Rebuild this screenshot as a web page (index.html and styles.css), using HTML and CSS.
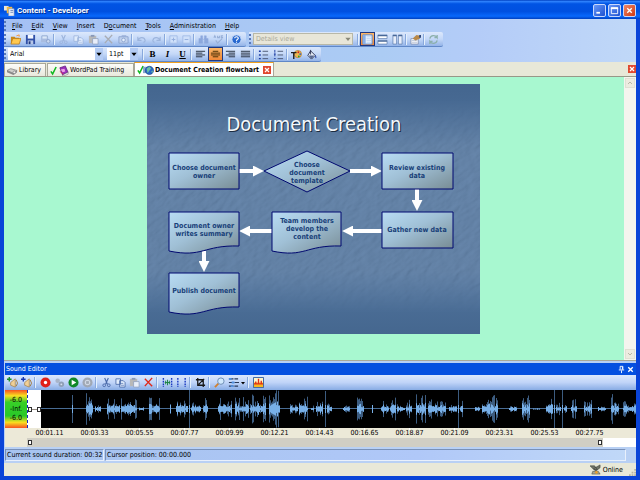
FILE: index.html
```html
<!DOCTYPE html>
<html lang="en">
<head>
    <meta charset="UTF-8">
    <meta name="viewport" content="width=device-width, initial-scale=1.0">
    <title>Content - Developer</title>
    <link rel="stylesheet" href="styles.css">
</head>
<body>
    <!-- icons used by the toolbars -->
    <svg class="defs" aria-hidden="true">
        <symbol id="app" viewBox="0 0 12 12"><path d="M0 1h5v5H0z" fill="#e8e8e0"/><path d="M3 2h6v7H3z" fill="#f0b840"/><path d="M5 4h6v8H5z" fill="#e4ecf8" stroke="#8090b0" stroke-width=".6"/><path d="M7 6h3M7 8h3" stroke="#7088b8"/></symbol>
        <symbol id="open" viewBox="0 0 12 12"><path d="M1 3h4l1 1h4v6H1z" fill="#c88818"/><path d="M3 5h9l-2 6H1z" fill="#ffc850" stroke="#b87818" stroke-width=".8"/><path d="M7 2l3-1v2" fill="none" stroke="#f89030"/></symbol>
        <symbol id="save" viewBox="0 0 12 12"><path d="M1 1h10v10H1z" fill="#3050a8"/><path d="M3 1h6v4H3z" fill="#f4f8ff"/><path d="M3 7h6v4H3z" fill="#b8c8e8"/><path d="M4 8h2v3H4z" fill="#203880"/></symbol>
        <symbol id="print" viewBox="0 0 12 12"><path d="M2 2h6v4H2z" fill="#dce8f8" stroke="#90a8d0"/><path d="M1 5h8v4H1z" fill="#a8bce0"/><circle cx="9" cy="8" r="2" fill="#c8d8f0" stroke="#88a0cc"/></symbol>
        <symbol id="cut" viewBox="0 0 12 12"><path d="M4 1l3 7M8 1L5 8" fill="none" stroke="currentColor" stroke-width="1.2"/><circle cx="3.500" cy="9" r="1.500" fill="none" stroke="currentColor"/><circle cx="8.500" cy="9" r="1.500" fill="none" stroke="currentColor"/></symbol>
        <symbol id="copy" viewBox="0 0 12 12"><path d="M1 2h5v6H1zM5 4h4l2 2v5H5z" fill="#e0ecfc" stroke="currentColor" stroke-width=".9"/><path d="M6 7h3M6 9h4" stroke="currentColor" stroke-width=".7"/></symbol>
        <symbol id="paste" viewBox="0 0 12 12"><path d="M1 2h8v8H1z" fill="#b8b8b8"/><path d="M3 1h4v2H3z" fill="#8898b8"/><path d="M5 5h6v6H5z" fill="#e8eefa" stroke="#8c9cbc" stroke-width=".8"/></symbol>
        <symbol id="del" viewBox="0 0 12 12"><path d="M2 2l8 8M10 1L2 10" fill="none" stroke="currentColor" stroke-width="1.500"/></symbol>
        <symbol id="camera" viewBox="0 0 12 12"><path d="M1 3h10v7H1zM4 2h5" fill="#c0d0ec" stroke="#8ca4d0"/><circle cx="6" cy="6.500" r="2" fill="#e4eefc" stroke="#8ca4d0"/></symbol>
        <symbol id="undo" viewBox="0 0 12 12"><path d="M2 3v4h4M2 7c2-4 7-4 8 0 0 1-1 2-2 2" fill="none" stroke="currentColor" stroke-width="1.200"/></symbol>
        <symbol id="redo" viewBox="0 0 12 12"><path d="M10 3v4H6M10 7C8 3 3 3 2 7c0 1 1 2 2 2" fill="none" stroke="currentColor" stroke-width="1.200"/></symbol>
        <symbol id="plus" viewBox="0 0 12 12"><path d="M2 2h8v8H2z" fill="#cfe0fa" stroke="#a4bce8"/><path d="M4 6h4M6 4v4" stroke="#90acdc"/></symbol>
        <symbol id="minus" viewBox="0 0 12 12"><path d="M2 2h8v8H2z" fill="#cfe0fa" stroke="#a4bce8"/><path d="M4 6h4" stroke="#90acdc"/></symbol>
        <symbol id="find" viewBox="0 0 12 12"><path d="M3 2h2v3H3zM7 2h2v3H7zM1 5h4v5H1zM7 5h4v5H7zM5 6h2" fill="#8ca8dc" stroke="#8ca8dc" stroke-width=".5"/></symbol>
        <symbol id="spell" viewBox="0 0 12 12"><path d="M1 4l1-2 1 2M5 2v2h2V2M11 2H9v2h2M3 7l2 3 5-5" fill="none" stroke="#98b0d8" stroke-width="1.200"/></symbol>
        <symbol id="help" viewBox="0 0 12 12"><circle cx="6" cy="6" r="5" fill="#2868d0" stroke="#c8dcf8"/><path d="M4 4.500c0-2 4-2 4 0C8 6 6 5.500 6 7.500M6 8.500v1" fill="none" stroke="#fff" stroke-width="1.200"/></symbol>
        <symbol id="pane" viewBox="0 0 12 12"><path d="M1 1h10v10H1z" fill="#e8f2fe" stroke="#5888d0"/><path d="M1 1h3v10H1z" fill="#88b0e8"/><path d="M5 3h5M5 5h5M5 7h5M5 9h5" stroke="#a8c4e8" stroke-width=".6"/></symbol>
        <symbol id="rows" viewBox="0 0 12 12"><path d="M1 1h10v4H1zM1 7h10v4H1z" fill="#fff" stroke="#6080b0" stroke-width=".8"/><path d="M1 1h10v1.500H1zM1 7h10v1.500H1z" fill="#486898"/></symbol>
        <symbol id="cols" viewBox="0 0 12 12"><path d="M1 1h4v10H1zM7 1h4v10H7z" fill="#e8eefa" stroke="#6080b0" stroke-width=".8"/><path d="M1 1h4v1.500H1zM7 1h4v1.500H7z" fill="#486898"/></symbol>
        <symbol id="props" viewBox="0 0 12 12"><path d="M1 5h8v6H1z" fill="#f8fafe" stroke="#7888a8" stroke-width=".8"/><path d="M2 7h6M2 9h6" stroke="#a0acc4" stroke-width=".7"/><path d="M3 5l4-4 4 1v3L6 7z" fill="#b88848"/><path d="M10 1h2v3h-2z" fill="#304878"/></symbol>
        <symbol id="refresh" viewBox="0 0 12 12"><path d="M2 5c1-4 6-4 8-1V1M10 4H7M10 7c-1 4-6 4-8 1v3M2 8h3" fill="none" stroke="#8cb0ac" stroke-width="1.400"/></symbol>
        <symbol id="left" viewBox="0 0 12 12"><path d="M1 2.500h10M1 4.500h7M1 6.500h10M1 8.500h7" stroke="#202838"/></symbol>
        <symbol id="center" viewBox="0 0 12 12"><path d="M3 2.500h6M1 4.500h10M1 6.500h10M3 8.500h6" stroke="#402800"/></symbol>
        <symbol id="right" viewBox="0 0 12 12"><path d="M1 2.500h10M4 4.500h7M1 6.500h10M4 8.500h7" stroke="#202838"/></symbol>
        <symbol id="full" viewBox="0 0 12 12"><path d="M1 2.500h10M1 4.500h10M1 6.500h10M1 8.500h10" stroke="#202838"/></symbol>
        <symbol id="list" viewBox="0 0 12 12"><path d="M1 2.500h2M1 6.500h2M1 10.500h2" stroke="#1838a0" stroke-width="1.600"/><path d="M5 2.500h6M5 6.500h6M5 10.500h6" stroke="#485470"/></symbol>
        <symbol id="nums" viewBox="0 0 12 12"><path d="M2 1v3M1 5.500h2M2 5v3M1 10.500h2" stroke="#1838a0"/><path d="M5 2.500h6M5 6.500h6M5 10.500h6" stroke="#485470"/></symbol>
        <symbol id="palette" viewBox="0 0 12 12"><circle cx="7.500" cy="5.500" r="4" fill="#f0b850" stroke="#a06818" stroke-width=".6"/><circle cx="8" cy="3.500" r="1" fill="#d02020"/><circle cx="10" cy="5.500" r="1" fill="#2860d0"/><circle cx="8.500" cy="8" r="1" fill="#20a030"/><path d="M0 4h6M3 4v7" stroke="#202020" stroke-width="1.500"/></symbol>
        <symbol id="bucket" viewBox="0 0 12 12"><path d="M5 2l5 5-4 4-4-4z" fill="#e8eef8" stroke="#283050"/><path d="M3 7h6l-3 4z" fill="#586890"/><path d="M5 6V1" stroke="#283050"/><path d="M10 6q2 3 1 4-1 1-1-4" fill="#1838a0"/></symbol>
        <symbol id="disk" viewBox="0 0 12 12"><path d="M0 6l4-2 7 2-4 3z" fill="#d0d0cc" stroke="#808080" stroke-width=".8"/><path d="M0 6v2l7 3V9zM11 6v2l-4 3V9z" fill="#888"/><circle cx="8" cy="8" r="1.500" fill="#eee" stroke="#666" stroke-width=".6"/></symbol>
        <symbol id="check" viewBox="0 0 8 12"><path d="M1 7l2 3 4-8" fill="none" stroke="#10b820" stroke-width="1.800"/></symbol>
        <symbol id="book" viewBox="0 0 12 12"><path d="M2 3l6-2 3 7-6 3z" fill="#9830b8" stroke="#501070" stroke-width=".7"/><path d="M3 5l4-1 1 3-3 1z" fill="#f0a0e8"/><path d="M5 11l6-3v2l-5 2z" fill="#fff" stroke="#555" stroke-width=".5"/><path d="M2 7l4 3" stroke="#d02060"/></symbol>
        <symbol id="globe" viewBox="0 0 12 12"><path d="M0 3h5v7H0z" fill="#88a8d0"/><circle cx="7" cy="7" r="4.500" fill="#2868c8" stroke="#103878" stroke-width=".6"/><path d="M4 5l3-2 2 2-2 2-2 3zM9 8l2-1-1 3z" fill="#68c0a0"/></symbol>
        <symbol id="close" viewBox="0 0 10 10"><path d="M2.500 2.500l5 5M7.500 2.500l-5 5" stroke="#fff" stroke-width="1.500"/></symbol>
        <symbol id="min" viewBox="0 0 10 10"><path d="M1.500 7.500h4" stroke="#fff" stroke-width="2"/></symbol>
        <symbol id="max" viewBox="0 0 10 10"><path d="M1.500 2h7v6.500h-7z" fill="none" stroke="#fff"/><path d="M1 2.500h8" stroke="#fff" stroke-width="2"/></symbol>
        <symbol id="pin" viewBox="0 0 10 10"><path d="M3.500 5V1.500h3V5M2 5.500h6M5 6v3M6 2v3" fill="none" stroke="#fff"/></symbol>
        <symbol id="addsound" viewBox="0 0 12 12"><path d="M0 2.500h5M2.500 0v5" stroke="currentColor" stroke-width="1.500"/><path d="M4 6l5-4v9L4 9z" fill="#f0d098" stroke="#a07838" stroke-width=".7"/><path d="M10 3q3 4 0 7" fill="none" stroke="#a07838"/></symbol>
        <symbol id="rec" viewBox="0 0 12 12"><circle cx="6" cy="6" r="5.500" fill="#e02018"/><circle cx="6" cy="6" r="1.800" fill="#fff"/></symbol>
        <symbol id="mics" viewBox="0 0 12 12"><circle cx="4" cy="4" r="2.500" fill="#a8b4c8"/><circle cx="8" cy="8" r="3" fill="#90a0b8"/><circle cx="8" cy="8" r="1" fill="#d8e0f0"/></symbol>
        <symbol id="play" viewBox="0 0 12 12"><circle cx="6" cy="6" r="5.500" fill="#108828"/><path d="M4 3l5 3-5 3z" fill="#fff"/></symbol>
        <symbol id="stop" viewBox="0 0 12 12"><circle cx="6" cy="6" r="5.500" fill="#a0a8b4"/><circle cx="6" cy="6" r="3" fill="#d0d8e4"/><path d="M4.500 4.500h3v3h-3z" fill="#a0a8b4"/></symbol>
        <symbol id="trim" viewBox="0 0 12 12"><path d="M1.500 1v10M10.500 1v10" stroke="#1838c0" stroke-width="1.500" stroke-dasharray="2 1"/><path d="M3 6h6M4 4v4M6 3v6M8 4v4" stroke="#188040"/></symbol>
        <symbol id="marks" viewBox="0 0 12 12"><path d="M2 1v10M10 1v10" stroke="#1838c0" stroke-width="1.500" stroke-dasharray="2 1"/></symbol>
        <symbol id="crop" viewBox="0 0 12 12"><path d="M3 1v8h8M1 3h8v8M4 8l6-6" fill="none" stroke="#181818" stroke-width="1.400"/></symbol>
        <symbol id="lens" viewBox="0 0 12 12"><path d="M1 11l4-4" stroke="#d08030" stroke-width="2"/><circle cx="7.500" cy="4.500" r="3.500" fill="#d0e8fc" stroke="#6888b0"/></symbol>
        <symbol id="levels" viewBox="0 0 12 12"><path d="M1 2h5M1 6h5M1 10h5M7 2h4M7 6h5M7 10h4" stroke="#283858" stroke-width="1.300"/><path d="M1 1h3v2H1zM4 5h3v2H4zM3 9h3v2H3z" fill="#5090e0"/></symbol>
        <symbol id="down" viewBox="0 0 6 6"><path d="M1 2h4L3 4.500z" fill="currentColor"/></symbol>
        <symbol id="chart" viewBox="0 0 12 12"><path d="M.5.500h11v11H.5z" fill="#fff4c8" stroke="#2858a0"/><path d="M1 6h10v5H1z" fill="#f8b820"/><path d="M3 5v3M6 2v6M9 4v4M1 7.500h10" stroke="#e03018" stroke-width="1.500"/></symbol>
        <symbol id="online" viewBox="0 0 12 12"><path d="M0 2h5l3 4H4zM4 5l7-4v3L6 8z" fill="#707468" stroke="#383c38" stroke-width=".6"/><path d="M3 8h6l2 3H2z" fill="#a8a890" stroke="#484840" stroke-width=".6"/><circle cx="7" cy="9" r="1.500" fill="#e8a030"/></symbol>
    </svg>

    <div class="window">
        <header class="titlebar">
            <svg class="icon"><use href="#app"/></svg>
            <h1>Content - Developer</h1>
            <button class="winbtn" aria-label="Minimize"><svg><use href="#min"/></svg></button>
            <button class="winbtn" aria-label="Maximize"><svg><use href="#max"/></svg></button>
            <button class="winbtn red" aria-label="Close"><svg><use href="#close"/></svg></button>
        </header>

        <div class="bars">
            <nav class="menu">
                <span class="grip"></span>
                <button><u>F</u>ile</button>
                <button><u>E</u>dit</button>
                <button><u>V</u>iew</button>
                <button><u>I</u>nsert</button>
                <button>D<u>o</u>cument</button>
                <button><u>T</u>ools</button>
                <button><u>A</u>dministration</button>
                <button><u>H</u>elp</button>
            </nav>
            <div class="row">
                <div class="toolbar">
                    <span class="grip"></span>
                    <button class="tool" aria-label="Open"><svg><use href="#open"/></svg></button>
                    <button class="tool" aria-label="Save"><svg><use href="#save"/></svg></button>
                    <button class="tool off" aria-label="Print"><svg><use href="#print"/></svg></button>
                    <span class="sep"></span>
                    <button class="tool off" aria-label="Cut"><svg><use href="#cut"/></svg></button>
                    <button class="tool off" aria-label="Copy"><svg><use href="#copy"/></svg></button>
                    <button class="tool off" aria-label="Paste"><svg><use href="#paste"/></svg></button>
                    <button class="tool gray" aria-label="Delete"><svg><use href="#del"/></svg></button>
                    <button class="tool off" aria-label="Snapshot"><svg><use href="#camera"/></svg></button>
                    <span class="sep"></span>
                    <button class="tool off" aria-label="Undo"><svg><use href="#undo"/></svg></button>
                    <button class="tool off" aria-label="Redo"><svg><use href="#redo"/></svg></button>
                    <span class="sep"></span>
                    <button class="tool small" aria-label="Expand"><svg><use href="#plus"/></svg></button>
                    <button class="tool small" aria-label="Collapse"><svg><use href="#minus"/></svg></button>
                    <span class="sep"></span>
                    <button class="tool off" aria-label="Find"><svg><use href="#find"/></svg></button>
                    <button class="tool off" aria-label="Spelling"><svg><use href="#spell"/></svg></button>
                    <span class="sep"></span>
                    <button class="tool" aria-label="Help"><svg><use href="#help"/></svg></button>
                </div>
                <div class="toolbar">
                    <span class="grip"></span>
                    <span class="combo view">
                        <select aria-label="View" disabled><option>Details view</option></select>
                        <svg><use href="#down"/></svg>
                    </span>
                    <span class="sep"></span>
                    <button class="tool on" aria-label="Outline pane"><svg><use href="#pane"/></svg></button>
                    <button class="tool" aria-label="Split rows"><svg><use href="#rows"/></svg></button>
                    <button class="tool" aria-label="Split columns"><svg><use href="#cols"/></svg></button>
                    <span class="sep"></span>
                    <button class="tool" aria-label="Properties"><svg><use href="#props"/></svg></button>
                    <span class="sep"></span>
                    <button class="tool" aria-label="Refresh"><svg><use href="#refresh"/></svg></button>
                </div>
            </div>
            <div class="row">
                <div class="toolbar">
                    <span class="grip"></span>
                    <span class="combo font">
                        <select aria-label="Font"><option>Arial</option></select>
                        <svg><use href="#down"/></svg>
                    </span>
                    <span class="combo size">
                        <select aria-label="Font size"><option>11pt</option></select>
                        <svg><use href="#down"/></svg>
                    </span>
                    <span class="sep"></span>
                    <button class="tool letter" aria-label="Bold"><b>B</b></button>
                    <button class="tool letter" aria-label="Italic"><i>I</i></button>
                    <button class="tool letter" aria-label="Underline"><u>U</u></button>
                    <span class="sep"></span>
                    <button class="tool" aria-label="Align left"><svg><use href="#left"/></svg></button>
                    <button class="tool on" aria-label="Center"><svg><use href="#center"/></svg></button>
                    <button class="tool" aria-label="Align right"><svg><use href="#right"/></svg></button>
                    <button class="tool" aria-label="Justify"><svg><use href="#full"/></svg></button>
                    <span class="sep"></span>
                    <button class="tool" aria-label="Bullets"><svg><use href="#list"/></svg></button>
                    <button class="tool" aria-label="Numbering"><svg><use href="#nums"/></svg></button>
                    <span class="sep"></span>
                    <button class="tool" aria-label="Text color"><svg><use href="#palette"/></svg></button>
                    <button class="tool" aria-label="Fill color"><svg><use href="#bucket"/></svg></button>
                </div>
            </div>
        </div>

        <div class="tabs">
            <button class="tab library"><svg class="icon"><use href="#disk"/></svg>Library</button>
            <button class="tab wordpad"><svg class="tick"><use href="#check"/></svg><svg class="icon"><use href="#book"/></svg>WordPad Training</button>
            <div class="tab active">
                <svg class="tick"><use href="#check"/></svg><svg class="icon"><use href="#globe"/></svg><span>Document Creation flowchart</span>
                <button class="x" aria-label="Close tab"><svg><use href="#close"/></svg></button>
            </div>
            <button class="x last" aria-label="Close document"><svg><use href="#close"/></svg></button>
        </div>

        <main class="work">
            <div class="canvas">
                <svg class="slide" viewBox="0 0 333 250">
                    <defs>
                        <linearGradient id="sky" x1="0" y1="0" x2="0" y2="1">
                            <stop offset="0" stop-color="#44668f"/><stop offset=".3" stop-color="#50739c"/>
                            <stop offset=".8" stop-color="#4e719a"/><stop offset="1" stop-color="#45678f"/>
                        </linearGradient>
                        <linearGradient id="box" x1="0" y1="0" x2="1" y2="1">
                            <stop offset="0" stop-color="#b8dcf4"/><stop offset=".45" stop-color="#a0c0d6"/><stop offset="1" stop-color="#788c94"/>
                        </linearGradient>
                        <linearGradient id="fade" x1="0" y1="0" x2="0" y2="1">
                            <stop offset=".06" stop-color="#000"/><stop offset=".25" stop-color="#fff"/>
                            <stop offset=".75" stop-color="#fff"/><stop offset=".92" stop-color="#000"/>
                        </linearGradient>
                        <mask id="middle"><rect width="333" height="250" fill="url(#fade)"/></mask>
                        <filter id="stone" x="0" y="0" width="1" height="1">
                            <feTurbulence type="fractalNoise" baseFrequency=".09 .22" numOctaves="3" seed="4"/>
                            <feDiffuseLighting surfaceScale="1" lighting-color="#a4bcd8"><feDistantLight azimuth="225" elevation="50"/></feDiffuseLighting>
                        </filter>
                        <marker id="head" viewBox="0 0 10 10" refX="1" refY="5" markerWidth="11" markerHeight="11" markerUnits="userSpaceOnUse" orient="auto"><path d="M0 0l10 5-10 5z" fill="#fff"/></marker>
                    </defs>
                    <rect width="333" height="250" fill="url(#sky)"/>
                    <g mask="url(#middle)" opacity=".3"><rect x="-120" y="-120" width="580" height="500" filter="url(#stone)" transform="rotate(-35 166 125)"/></g>
                    <text class="heading shade" x="168" y="48">Document Creation</text>
                    <text class="heading" x="167" y="47">Document Creation</text>
                    <g class="arrows">
                        <path d="M92 87h15"/><path d="M203 87h22"/><path d="M270 105v12"/>
                        <path d="M235 147h-30"/><path d="M125 147h-23"/><path d="M57 167v11"/>
                    </g>
                    <g class="shapes">
                        <path d="M22 69h70v36H22z"/>
                        <path d="M117 87l43-20 43 20-43 21z"/>
                        <path d="M235 69h71v36h-71z"/>
                        <path d="M235 128h71v36h-71z"/>
                        <path d="M22 128h70v34c-36-1-36 12-70 5z"/>
                        <path d="M125 128h69v34c-36-1-36 12-69 5z"/>
                        <path d="M22 189h70v34c-36-1-36 12-70 5z"/>
                    </g>
                    <g class="labels">
                        <text x="57" y="86">Choose document</text><text x="57" y="94">owner</text>
                        <text x="160" y="83">Choose</text><text x="160" y="91">document</text><text x="160" y="99">template</text>
                        <text x="270" y="86">Review existing</text><text x="270" y="94">data</text>
                        <text x="270" y="148">Gather new data</text>
                        <text x="57" y="144">Document owner</text><text x="57" y="152">writes summary</text>
                        <text x="160" y="139">Team members</text><text x="160" y="147">develop the</text><text x="160" y="155">content</text>
                        <text x="57" y="209">Publish document</text>
                    </g>
                </svg>
            </div>
            <div class="scrollbar">
                <svg viewBox="0 0 8 8"><path d="M2 5l2-2 2 2" fill="none" stroke="#b8b8a8"/></svg>
                <svg viewBox="0 0 8 8"><path d="M2 3l2 2 2-2" fill="none" stroke="#b8b8a8"/></svg>
            </div>
        </main>

        <section class="sound">
            <div class="panelhead">
                <h2>Sound Editor</h2>
                <button aria-label="Pin"><svg><use href="#pin"/></svg></button>
                <button aria-label="Close"><svg><use href="#close"/></svg></button>
            </div>
            <div class="soundbar">
                <button class="tool green" aria-label="Add sound"><svg><use href="#addsound"/></svg></button>
                <button class="tool blue" aria-label="Insert sound"><svg><use href="#addsound"/></svg></button>
                <span class="sep"></span>
                <button class="tool" aria-label="Record"><svg><use href="#rec"/></svg></button>
                <button class="tool" aria-label="Record options"><svg><use href="#mics"/></svg></button>
                <button class="tool" aria-label="Play"><svg><use href="#play"/></svg></button>
                <button class="tool" aria-label="Stop"><svg><use href="#stop"/></svg></button>
                <span class="sep"></span>
                <button class="tool steel" aria-label="Cut"><svg><use href="#cut"/></svg></button>
                <button class="tool steel" aria-label="Copy"><svg><use href="#copy"/></svg></button>
                <button class="tool off" aria-label="Paste"><svg><use href="#paste"/></svg></button>
                <button class="tool danger" aria-label="Delete"><svg><use href="#del"/></svg></button>
                <span class="sep"></span>
                <button class="tool" aria-label="Trim silence"><svg><use href="#trim"/></svg></button>
                <button class="tool" aria-label="Select range"><svg><use href="#marks"/></svg></button>
                <span class="sep"></span>
                <button class="tool" aria-label="Crop"><svg><use href="#crop"/></svg></button>
                <span class="sep"></span>
                <button class="tool" aria-label="Zoom"><svg><use href="#lens"/></svg></button>
                <button class="tool" aria-label="Levels"><svg><use href="#levels"/></svg></button>
                <button class="tool arrow" aria-label="Level options"><svg><use href="#down"/></svg></button>
                <span class="sep"></span>
                <button class="tool" aria-label="Chart"><svg><use href="#chart"/></svg></button>
            </div>
            <div class="editor">
                <div class="meter"><span>-6.0</span><span>-Inf.</span><span>-6.0</span></div>
                <div class="track">
                    <div class="lead"><span class="thumb"></span><span class="thumb"></span></div>
                    <svg class="wave" viewBox="0 0 595 38" preserveAspectRatio="none">
                        <path d="M0 18.500h595" class="axis"/>
                        <path id="peaks" class="peaks"/>
                        <path id="body" class="core"/>
                    </svg>
                </div>
                <div class="ruler" id="ruler"></div>
                <div class="range"><span class="thumb"></span><span class="thumb"></span></div>
            </div>
            <div class="info">
                <span>Current sound duration: 00:32</span>
                <span class="wide">Cursor position: 00:00.000</span>
            </div>
        </section>

        <footer class="status">
            <svg class="icon"><use href="#online"/></svg>
            <span>Online</span>
            <svg class="corner" viewBox="0 0 8 8"><path d="M6 0h2v2H6zM3 3h2v2H3zM6 3h2v2H6zM0 6h2v2H0zM3 6h2v2H3zM6 6h2v2H6z" fill="#b8b4a0"/></svg>
        </footer>
    </div>
    <script src="app.js"></script>
</body>
</html>
```
FILE: styles.css
```css
* {
    box-sizing: border-box;
}
body {
    margin: 0;
    font-family: "DejaVu Sans Condensed", "DejaVu Sans", sans-serif;
    font-size: 7px;
    line-height: 10px;
    color: #000;
}
button {
    margin: 0;
    padding: 0;
    border: none;
    background: none;
    font: inherit;
    color: inherit;
}
h1, h2 {
    margin: 0;
    font-size: 7px;
}
svg {
    display: block;
    flex: none;
}
.defs {
    position: absolute;
    width: 0;
    height: 0;
}
.window {
    display: flex;
    flex-direction: column;
    min-height: 100vh;
    padding: 0 4px 4px;
    background: #0a44d8;
}
.icon {
    width: 11px;
    height: 11px;
}

/* title bar */
.titlebar {
    display: flex;
    align-items: center;
    gap: 2px;
    height: 19px;
    margin: 0 -4px;
    padding: 2px 4px 0;
    background: linear-gradient(#0040c0, #2c80fc 8%, #0054e4 20%, #0050e0 60%, #0868fc 85%, #0040c0);
    color: #fff;
}
.titlebar h1 {
    flex: 1;
    font-family: Roboto, "Noto Sans", sans-serif;
    font-size: 8px;
    text-shadow: 1px 1px #003090;
}
.winbtn {
    width: 13px;
    height: 13px;
    padding: 1px;
    border: 1px solid #c8d8fc;
    border-radius: 2px;
    background: linear-gradient(135deg, #6898f8, #1c50d0);
}
.winbtn.red {
    background: linear-gradient(135deg, #f08868, #d03810);
}
.winbtn svg, .x svg {
    width: 100%;
    height: 100%;
}

/* menu and toolbars */
.bars {
    background: linear-gradient(90deg, #a4c0f4, #acccf4 60%, #b4ccf8 75%, #c0d8f8);
}
.menu {
    display: flex;
    align-items: center;
    gap: 9px;
    height: 13px;
}
.menu .grip {
    margin-right: -5px;
}
.grip {
    flex: none;
    width: 4px;
    height: 10px;
    border-left: 2px dotted #5878b8;
}
.row {
    display: flex;
    gap: 3px;
    height: 15px;
}
.toolbar {
    display: flex;
    align-items: center;
    height: 15px;
    padding-right: 2px;
    border-bottom: 1px solid #6088c8;
    border-radius: 0 2px 2px 0;
    background: linear-gradient(#dce8fc, #c4d8f8 50%, #94b4e8);
}
.tool {
    display: flex;
    flex: none;
    align-items: center;
    justify-content: center;
    width: 15px;
    height: 14px;
}
.tool svg {
    width: 11px;
    height: 11px;
}
.tool.small {
    width: 13px;
}
.tool.off {
    color: #9cb4dc;
}
.tool.gray {
    color: #a8acb4;
}
.tool.on {
    border: 1px solid #203880;
    background: linear-gradient(#fcb868, #f08838);
}
.soundbar .tool {
    width: 14px;
}
.soundbar .tool.arrow {
    width: 6px;
}
.tool.arrow svg {
    width: 6px;
    height: 6px;
}
.letter {
    font-family: "Liberation Serif", serif;
    font-size: 9px;
    font-weight: bold;
}
.green { color: #189028; }
.blue { color: #1838b0; }
.steel { color: #4868a8; }
.danger { color: #e02818; }
.sep {
    flex: none;
    width: 3px;
    height: 11px;
    border-left: 1px solid #88a8dc;
    box-shadow: inset 1px 0 #e4f0fc;
}
.soundbar .sep {
    margin: 0 1px;
}
.combo {
    display: flex;
    align-items: center;
    height: 12px;
    margin-right: 4px;
    background: #fff;
}
.combo select {
    flex: 1;
    min-width: 0;
    height: 12px;
    padding: 0 2px;
    border: none;
    appearance: none;
    background: none;
    font: inherit;
    color: #000;
}
.combo svg {
    width: 8px;
    height: 12px;
    background: #b4ccf4;
}
.combo.font {
    width: 95px;
}
.combo.size {
    width: 31px;
}
.combo.view {
    width: 100px;
    border: 1px solid #b8b8a8;
    background: #e8e6d8;
    color: #888878;
}
.combo.view select {
    color: #a8a898;
    opacity: 1;
}
.combo.view svg {
    height: 10px;
    background: none;
}

/* document tabs */
.tabs {
    display: flex;
    align-items: flex-end;
    height: 15px;
    border-bottom: 1px solid #989888;
    background: #e8e8d8;
}
.tab {
    display: flex;
    align-items: center;
    gap: 1px;
    height: 13px;
    padding: 0 2px;
    border: 1px solid #a8a898;
    border-bottom: none;
    background: linear-gradient(#fcfcf8, #e8e8dc);
    white-space: nowrap;
}
.tab.library {
    width: 42px;
    margin-right: 1px;
}
.tab.wordpad {
    width: 87px;
}
.tab.active {
    width: 140px;
    height: 14px;
    border-top: 1px solid #f0a020;
    background: #fff;
    font-weight: bold;
}
.tab.active .icon {
    margin-left: -2px;
}
.tab.active span {
    flex: 1;
}
.tick {
    width: 7px;
    height: 11px;
}
.x {
    flex: none;
    width: 8px;
    height: 8px;
    background: #e04830;
}
.x.last {
    align-self: center;
    margin-left: auto;
}

/* slide area */
.work {
    display: flex;
    flex: 1;
    border-bottom: 1px solid #a8a898;
    background: #a8f8d0;
}
.canvas {
    flex: 1;
    padding: 7px 2px 7px 0;
}
.slide {
    width: 333px;
    height: 250px;
    margin: 0 auto;
}
.heading {
    font-size: 20px;
    text-anchor: middle;
    fill: #f4f8fc;
}
.heading.shade {
    fill: #1c2c40;
}
.arrows path {
    fill: none;
    stroke: #fff;
    stroke-width: 4px;
    marker-end: url(#head);
}
.shapes path {
    fill: url(#box);
    stroke: #000870;
}
.labels text {
    font-size: 7px;
    font-weight: bold;
    text-anchor: middle;
    fill: #184078;
}
.scrollbar {
    display: flex;
    flex-direction: column;
    justify-content: space-between;
    width: 12px;
    padding: 1px;
    background: #f4f4ee;
}
.scrollbar svg {
    width: 10px;
    height: 10px;
    border: 1px solid #e0e0d4;
    background: #ecebe0;
}

/* sound editor */
.sound {
    padding: 2px 0 2px 1px;
    background: #b8d0f4;
}
.panelhead {
    display: flex;
    align-items: center;
    height: 12px;
    padding: 0 1px;
    background: #0450e0;
    color: #fff;
}
.panelhead h2 {
    flex: 1;
    font-weight: normal;
}
.panelhead svg {
    width: 9px;
    height: 9px;
}
.soundbar {
    display: flex;
    align-items: center;
    height: 15px;
    background: linear-gradient(#dce8fc, #c0d4f8 50%, #88ace4);
}
.editor {
    display: grid;
    grid-template-columns: 22px 1fr;
    grid-template-rows: 38px 10px 9px;
    background: #ece9d8;
}
.meter {
    display: flex;
    flex-direction: column;
    justify-content: center;
    align-items: center;
    line-height: 9px;
    background: linear-gradient(#f85020, #f8e020 15%, #38d028 32%, #28c828 68%, #f8e020 85%, #f85020);
}
.track {
    display: flex;
    background: #000;
}
.lead {
    display: flex;
    align-items: center;
    justify-content: space-between;
    width: 14px;
    border-left: 1px dashed #1828c0;
    background: linear-gradient(#908880, #908880) center / 100% 1px no-repeat #fff;
}
.wave {
    flex: 1;
    min-width: 0;
    height: 38px;
}
.wave path {
    fill: none;
}
.wave .axis {
    stroke: #486c94;
}
.wave .peaks {
    stroke: #3c5c80;
}
.wave .core {
    stroke: #78b0e8;
}
.ruler {
    display: grid;
    grid-template-columns: repeat(13, 45fr) 24fr;
    grid-column: 2;
    text-align: center;
}
.ruler span {
    background: linear-gradient(#fff, #fff) top center / 1px 2px no-repeat;
}
.range {
    display: flex;
    grid-column: 2;
    align-items: center;
    justify-content: space-between;
    margin-right: 33px;
    padding: 0 1px;
    background: #d0cec4;
    box-shadow: 33px 0 #fff;
}
.thumb {
    width: 4px;
    height: 5px;
    border: 1px solid #303030;
    background: #fff;
}
.info {
    display: flex;
    gap: 1px;
    margin: 2px 10px 0 0;
}
.info span {
    width: 99px;
    height: 12px;
    padding: 0 1px;
    border: 1px solid;
    border-color: #7890b8 #e8f0fc #e8f0fc #7890b8;
    background: #a8c4f0;
    white-space: nowrap;
}
.info .wide {
    flex: 1;
    background: linear-gradient(90deg, #a8c4f0, #b0c8f8 60%, #c0d8f8);
}

/* status bar */
.status {
    display: flex;
    align-items: center;
    justify-content: flex-end;
    gap: 2px;
    height: 13px;
    background: #e8e8d8;
}
.corner {
    align-self: flex-end;
    width: 7px;
    height: 7px;
    margin-left: 4px;
}
```
FILE: app.js
```js
// each burst of sound: start, end, height
var bursts = [
    [72, 73, 14], [86, 93, 18], [95, 101, 5], [107, 120, 12], [121, 137, 12], [139, 144, 4],
    [149, 160, 13], [170, 171, 5], [176, 188, 14], [189, 190, 19], [191, 201, 7], [203, 208, 11],
    [218, 232, 12], [235, 249, 13], [250, 266, 15], [269, 280, 19], [290, 298, 6], [299, 308, 14],
    [311, 314, 4], [316, 323, 12], [325, 326, 18], [327, 332, 9], [343, 350, 4], [357, 364, 13],
    [372, 373, 4], [381, 389, 10], [390, 396, 12], [397, 405, 5], [406, 412, 12], [416, 426, 17],
    [428, 446, 10], [449, 457, 6], [458, 459, 19], [460, 463, 10], [475, 480, 6], [482, 498, 14],
    [509, 517, 4], [522, 530, 14], [533, 540, 1], [546, 553, 12], [554, 555, 19], [556, 561, 8],
    [562, 563, 19], [564, 567, 6], [571, 577, 10], [584, 592, 10], [598, 606, 4], [611, 619, 15],
    [623, 636, 9]
];
var seed = 7;
function rand() {
    seed = (seed * 16807) % 2147483647;
    return seed / 2147483647;
}

var peaks = '';
var body = '';
bursts.forEach(function (b) {
    var single = b[1] - b[0] < 2;
    for (var x = b[0]; x < b[1]; x++) {
        var r = rand();
        var h = single ? b[2] : b[2] * (0.2 + 0.8 * r * r);
        var c = Math.min(h, 1 + (single ? 3 : b[2] * 0.35 * rand()));
        var px = x - 41 + 0.5;
        peaks += 'M' + px + ' ' + (19 - h) + 'V' + (19 + h);
        body += 'M' + px + ' ' + (19 - c) + 'V' + (19 + c);
    }
});
document.getElementById('peaks').setAttribute('d', peaks);
document.getElementById('body').setAttribute('d', body);

var times = ['00:01.11', '00:03.33', '00:05.55', '00:07.77', '00:09.99', '00:12.21', '00:14.43',
    '00:16.65', '00:18.87', '00:21.09', '00:23.31', '00:25.53', '00:27.75'];
var ruler = document.getElementById('ruler');
times.forEach(function (t) {
    var s = document.createElement('span');
    s.textContent = t;
    ruler.appendChild(s);
});
```
